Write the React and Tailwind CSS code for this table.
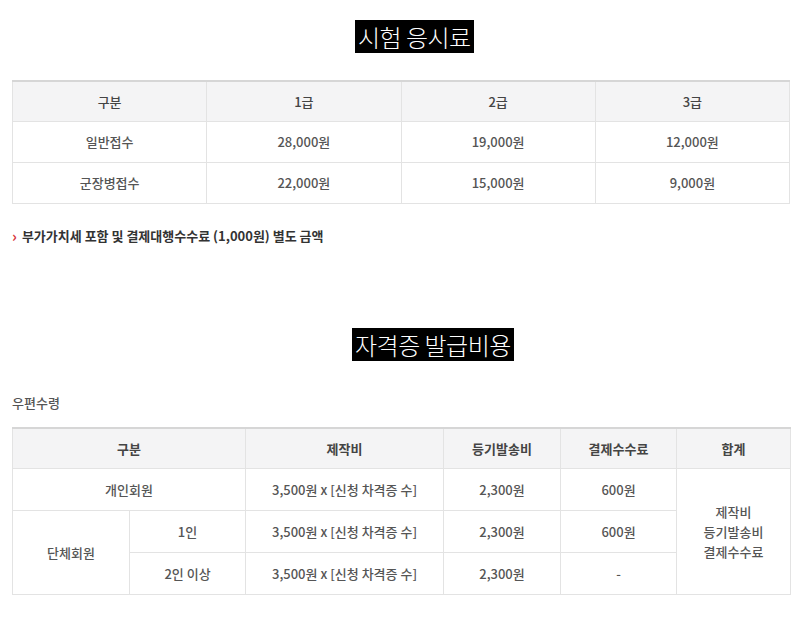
import React from "react";

const font = { fontFamily: '"Noto Sans CJK KR", "Noto Sans", sans-serif' };

function Title({ children, pl }) {
  return (
    <div className={`flex ${pl}`}>
      <span className="bg-black text-white text-[24px] leading-[33px] px-[3px] font-light tracking-[-0.5px]">
        {children}
      </span>
    </div>
  );
}

export default function App() {
  const th1 = "border border-[#e3e3e3] font-medium text-[13px] text-[#444] text-center h-[40px] bg-[#f4f4f5]";
  const td1 = "border border-[#e3e3e3] font-medium text-[13px] text-[#555] text-center h-[41px]";
  const th2 = "border border-[#e3e3e3] font-bold text-[13px] text-[#444] text-center h-[41px] bg-[#f4f4f5]";
  const td2 = "border border-[#e3e3e3] font-medium text-[13px] text-[#555] text-center h-[42px]";
  return (
    <div className="w-[800px] h-[625px] bg-white px-[12px] pt-[20px]" style={font}>
      <Title pl="pl-[343px]">시험 응시료</Title>
      <table className="mt-[27px] w-[778px] border-collapse table-fixed border-t-2 border-t-[#d6d6d6]">
        <thead>
          <tr>
            <th className={th1}>구분</th>
            <th className={th1}>1급</th>
            <th className={th1}>2급</th>
            <th className={th1}>3급</th>
          </tr>
        </thead>
        <tbody>
          <tr>
            <td className={td1}>일반접수</td>
            <td className={td1}>28,000원</td>
            <td className={td1}>19,000원</td>
            <td className={td1}>12,000원</td>
          </tr>
          <tr>
            <td className={td1}>군장병접수</td>
            <td className={td1}>22,000원</td>
            <td className={td1}>15,000원</td>
            <td className={td1}>9,000원</td>
          </tr>
        </tbody>
      </table>
      <div className="mt-[22px] flex items-center text-[13px] font-bold text-[#333] leading-[20px]">
        <span className="text-[#d8343a] font-bold mr-[5px] text-[15px] leading-[20px]">›</span>
        <span>부가가치세 포함 및 결제대행수수료 (1,000원) 별도 금액</span>
      </div>
      <div className="mt-[82px]">
        <Title pl="pl-[340px]">자격증 발급비용</Title>
      </div>
      <div className="mt-[32px] text-[13px] text-[#555] font-medium leading-[20px]">우편수령</div>
      <table className="mt-[14px] w-[778px] border-collapse table-fixed border-t-2 border-t-[#d6d6d6]">
        <colgroup>
          <col className="w-[117px]" />
          <col className="w-[116px]" />
          <col className="w-[198px]" />
          <col className="w-[117px]" />
          <col className="w-[116px]" />
          <col className="w-[114px]" />
        </colgroup>
        <thead>
          <tr>
            <th className={th2} colSpan={2}>구분</th>
            <th className={th2}>제작비</th>
            <th className={th2}>등기발송비</th>
            <th className={th2}>결제수수료</th>
            <th className={th2}>합계</th>
          </tr>
        </thead>
        <tbody>
          <tr>
            <td className={td2} colSpan={2}>개인회원</td>
            <td className={td2}>3,500원 x [신청 차격증 수]</td>
            <td className={td2}>2,300원</td>
            <td className={td2}>600원</td>
            <td className={td2 + " leading-[20px]"} rowSpan={3}>
              제작비
              <br />
              등기발송비
              <br />
              결제수수료
            </td>
          </tr>
          <tr>
            <td className={td2} rowSpan={2}>단체회원</td>
            <td className={td2}>1인</td>
            <td className={td2}>3,500원 x [신청 차격증 수]</td>
            <td className={td2}>2,300원</td>
            <td className={td2}>600원</td>
          </tr>
          <tr>
            <td className={td2}>2인 이상</td>
            <td className={td2}>3,500원 x [신청 차격증 수]</td>
            <td className={td2}>2,300원</td>
            <td className={td2}>-</td>
          </tr>
        </tbody>
      </table>
    </div>
  );
}
